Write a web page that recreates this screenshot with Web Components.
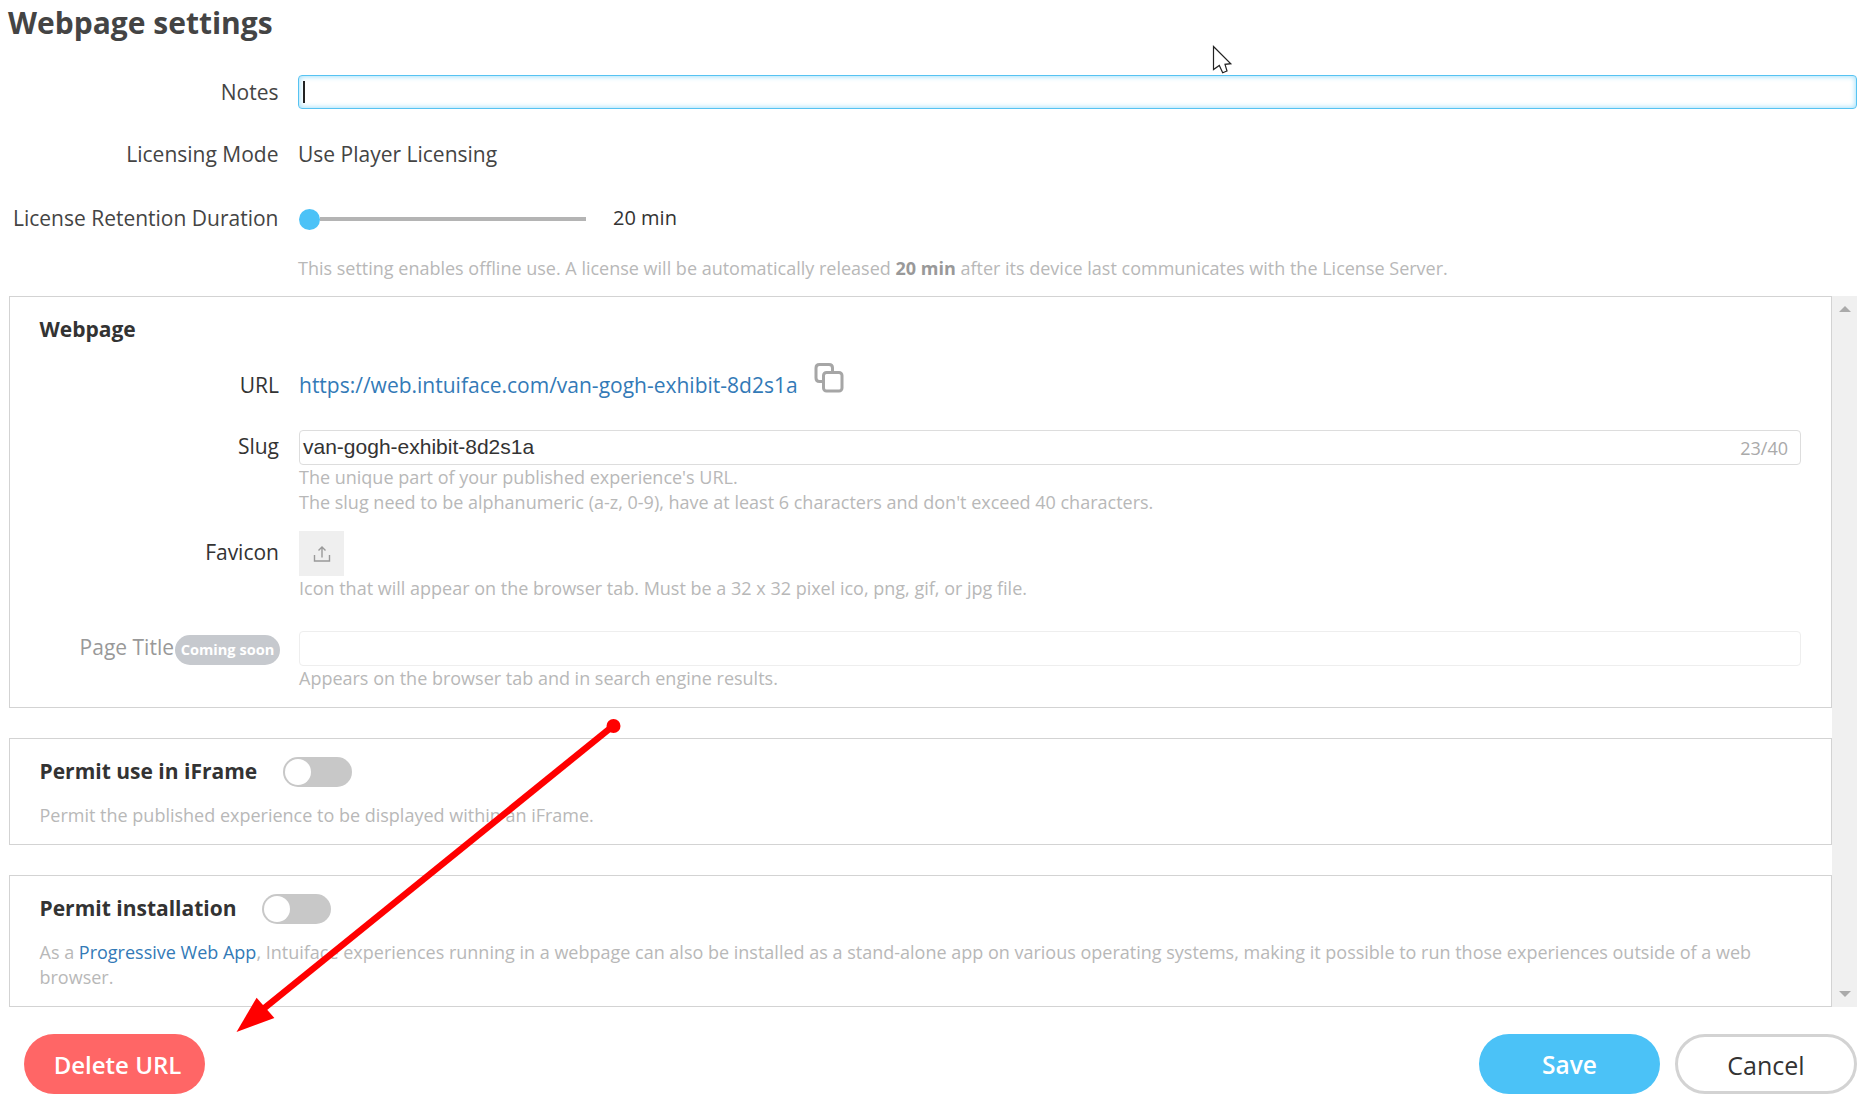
<!DOCTYPE html>
<html lang="en">
<head>
<meta charset="utf-8">
<title>Webpage settings</title>
<style>
html,body{margin:0;padding:0;background:#fff;overflow:hidden}
body{font-family:"Open Sans",sans-serif;color:#444;width:1873px;height:1109px}
</style>
</head>
<body>
<settings-page>
  <page-title>Webpage settings</page-title>
  <form-row top style="--top:26px;--h:34px"><span slot="label">Notes</span><text-field focused></text-field></form-row>
  <form-row top style="--top:28px;--h:34px"><span slot="label">Licensing Mode</span><span>Use Player Licensing</span></form-row>
  <form-row top style="--top:30px;--h:34px"><span slot="label">License Retention Duration</span><range-slider>20 min</range-slider></form-row>
  <form-row style="--top:21px;--h:25px"><help-text>This setting enables offline use. A license will be automatically released <b>20 min</b> after its device last communicates with the License Server.</help-text></form-row>
  <scroll-area>
    <settings-panel style="--pt:19px;--pb:16px">
      <panel-heading>Webpage</panel-heading>
      <form-row nested style="--top:26px;--h:34px"><span slot="label">URL</span><url-link>https://web.intuiface.com/van-gogh-exhibit-8d2s1a</url-link></form-row>
      <form-row nested style="--top:28px;--h:35px;--lp:2px"><span slot="label">Slug</span><text-field counter="23/40">van-gogh-exhibit-8d2s1a</text-field>
        <help-text>The unique part of your published experience's URL.<br>The slug need to be alphanumeric (a-z, 0-9), have at least 6 characters and don't exceed 40 characters.</help-text></form-row>
      <form-row nested style="--top:16px;--h:45px;--lp:2px"><span slot="label">Favicon</span><upload-button></upload-button>
        <help-text>Icon that will appear on the browser tab. Must be a 32 x 32 pixel ico, png, gif, or jpg file.</help-text></form-row>
      <form-row nested muted style="--top:30px;--h:35px"><span slot="label">Page Title<soon-pill>Coming soon</soon-pill></span><text-field disabled></text-field>
        <help-text>Appears on the browser tab and in search engine results.</help-text></form-row>
    </settings-panel>
    <settings-panel style="--pt:18px;--pb:16px;--mt:30px">
      <toggle-heading style="--gap:26px">Permit use in iFrame</toggle-heading>
      <help-text style="margin-top:16px">Permit the published experience to be displayed within an iFrame.</help-text>
    </settings-panel>
    <settings-panel style="--pt:18px;--pb:16px;--mt:30px">
      <toggle-heading style="--gap:25px">Permit installation</toggle-heading>
      <help-text style="margin-top:16px">As a <url-link plain>Progressive Web App</url-link>, Intuiface experiences running in a webpage can also be installed as a stand-alone app on various operating systems, making it possible to run those experiences outside of a web<br>browser.</help-text>
    </settings-panel>
  </scroll-area>
  <page-footer>
    <pill-button kind="danger" slot="left">Delete URL</pill-button>
    <pill-button kind="primary">Save</pill-button>
    <pill-button kind="outline">Cancel</pill-button>
  </page-footer>
</settings-page>
<script>
function def(name, html){
  customElements.define(name, class extends HTMLElement{
    constructor(){super();this.attachShadow({mode:'open'}).innerHTML=typeof html==='function'?html(this):html;}
  });
}
def('settings-page',`<style>
:host{display:block;position:relative;width:1873px;height:1109px;box-sizing:border-box;padding:0 16px 0 9px;font:21px/1.35 "Open Sans",sans-serif;color:#444}
svg{position:absolute;left:0;top:0;pointer-events:none}
</style><slot></slot>
<svg width="1873" height="1109" viewBox="0 0 1873 1109" aria-hidden="true">
<line x1="613" y1="726" x2="262" y2="1010" stroke="#ff0000" stroke-width="6.5"/>
<circle cx="613.5" cy="726" r="7" fill="#ff0000"/>
<polygon points="236.5,1032 256.6,997.7 274.4,1018" fill="#ff0000"/>
<path d="M1213.5 46.5 L1230.8 63.7 L1225 64.3 L1227 71 L1222.7 72.7 L1219.3 65.5 L1213.500 69.5 Z" fill="#fff" stroke="#222" stroke-width="1.2"/>
</svg>`);
def('page-title',`<style>:host{display:block;height:49px;font:700 30px/46px "Open Sans",sans-serif;color:#444;margin-left:-1px;white-space:nowrap}</style><slot></slot>`);
def('form-row',`<style>
:host{display:grid;grid-template-columns:269px 1fr;column-gap:20px;margin-top:var(--top,0);font-size:21px;color:#444}
:host([top]){grid-template-columns:269.5px 1fr;column-gap:19.5px}
:host([nested]){color:#333}
.l{grid-column:1;box-sizing:border-box;padding-bottom:var(--lp,0);text-align:right;line-height:var(--h);height:var(--h);white-space:nowrap;display:flex;justify-content:flex-end;align-items:center}
:host([muted]) .l{color:#999}
.c{grid-column:2;min-width:0;line-height:var(--h)}
</style><div class="l"><slot name="label"></slot></div><div class="c"><slot></slot></div>`);
def('text-field',el=>`<style>
:host{display:flex;align-items:center;box-sizing:border-box;height:34px;border:1px solid #ddd;border-radius:4px;padding:0 10px 0 3px;font:21px/1 "Liberation Sans",sans-serif;color:#333;background:#fff}
:host([focused]){border:1px solid #56c3f2;box-shadow:inset 0 0 5px 1px #a9e2fa}
:host([disabled]){height:35px;border-color:#eee}
:host([counter]){height:35px}
.t{flex:1;white-space:nowrap;padding-bottom:2px}
.n{font:18px/1 "Open Sans",sans-serif;color:#aaa;margin-right:2px}
.caret{width:2px;height:22px;background:#222;margin-left:1px}
</style>${el.hasAttribute('focused')?'<span class="caret"></span>':''}<span class="t"><slot></slot></span>${el.getAttribute('counter')?`<span class="n">${el.getAttribute('counter')}</span>`:''}`);
def('range-slider',`<style>
:host{display:flex;align-items:center;height:34px;font-size:20px;color:#333}
.s{display:flex;align-items:center;width:287px;margin-left:1px;margin-top:2px}
.th{width:21px;height:21px;border-radius:50%;background:#4bc2f7;flex:none}
.tr{flex:1;height:4px;background:#b4b4b4}
.v{margin-left:27px;white-space:nowrap}
</style><div class="s"><div class="th"></div><div class="tr"></div></div><div class="v"><slot></slot></div>`);
def('help-text',`<style>
:host{display:block;font:18px/25px "Open Sans",sans-serif;color:#b8b8b8}
::slotted(b){font-weight:700;color:#999}
</style><slot></slot>`);
def('scroll-area',`<style>
:host{display:flex;align-items:stretch;height:711px;margin-top:15px}
.p{flex:1;min-width:0;display:flex;flex-direction:column}
.b{width:25px;flex:none;background:#f0f0f0;display:flex;flex-direction:column;justify-content:space-between;align-items:center;padding:10px 0;box-sizing:border-box}
.a{width:0;height:0;border-left:6px solid transparent;border-right:6px solid transparent}
.u{border-bottom:6px solid #aaa}
.d{border-top:6px solid #aaa}
</style><div class="p"><slot></slot></div><div class="b"><div class="a u"></div><div class="a d"></div></div>`);
def('settings-panel',`<style>
:host{display:block;box-sizing:border-box;border:1px solid #d3d3d3;background:#fff;margin-top:var(--mt,0);padding:var(--pt) 30px var(--pb) 29.5px;flex:none}
::slotted(form-row){margin-left:-29.5px}
</style><slot></slot>`);
def('panel-heading',`<style>:host{display:block;font:700 21px/26px "Open Sans",sans-serif;color:#333}</style><slot></slot>`);
def('url-link',el=>`<style>
:host{display:inline-flex;align-items:center;color:#337ab7;white-space:nowrap}
:host([plain]){display:inline}
svg{margin-left:16px;margin-top:-14px;flex:none}
</style><slot></slot>${el.hasAttribute('plain')?'':`<svg width="30" height="30" viewBox="0 0 30 30" fill="none" stroke="#a6a6a6" stroke-width="3"><path d="M8 18.500 H5.500 Q2 18.500 2 15 V5 Q2 1.500 5.500 1.500 H15 Q18.500 1.500 18.500 5 V8"/><rect x="9.500" y="9.500" width="18.500" height="18.500" rx="3"/></svg>`}`);
def('upload-button',`<style>
:host{display:flex;width:45px;height:45px;background:#efefef;align-items:center;justify-content:center}
</style><svg width="18" height="18" viewBox="0 0 18 18" fill="none" stroke="#999" stroke-width="1.4"><path d="M9 12.500 V2 M5.500 5.500 L9 2 L12.500 5.500 M1.500 10 V16 H16.500 V10"/></svg>`);
def('soon-pill',`<style>
:host{display:inline-block;width:105px;height:30px;margin:0 -1px 2px 1px;border-radius:15px;background:#c6c9ce;color:#fff;font:700 14.6px/28px "Open Sans",sans-serif;text-align:center;white-space:nowrap}
</style><slot></slot>`);
def('toggle-heading',`<style>
:host{display:flex;align-items:center;height:30px;font:700 21px/30px "Open Sans",sans-serif;color:#333;white-space:nowrap}
.x{display:block;height:28px;line-height:28px;margin-bottom:2px}
.t{display:flex;width:69px;height:30px;box-sizing:border-box;padding:2px;margin-left:var(--gap);border-radius:15px;background:#c8c8c8}
.k{width:26px;height:26px;border-radius:50%;background:#fff}
</style><span class="x"><slot></slot></span><div class="t"><div class="k"></div></div>`);
def('page-footer',`<style>
:host{display:flex;align-items:center;margin-top:27px;padding-left:15px;gap:15px}
.l{margin-right:auto;display:flex}
</style><div class="l"><slot name="left"></slot></div><slot></slot>`);
def('pill-button',`<style>
:host{display:flex;align-items:center;justify-content:center;box-sizing:border-box;width:181px;height:60px;padding-top:2px;border-radius:30px;font:600 24.5px/1 "Open Sans",sans-serif;white-space:nowrap;color:#fff}
:host([kind=danger]){background:#ff6666;font-size:24px;padding-left:6px}
:host([kind=primary]){background:#4bc2f7}
:host([kind=outline]){background:#fff;border:3px solid #d3d3d3;color:#333;font-weight:400;font-size:25px;width:182px}
</style><slot></slot>`);
</script>
</body>
</html>
